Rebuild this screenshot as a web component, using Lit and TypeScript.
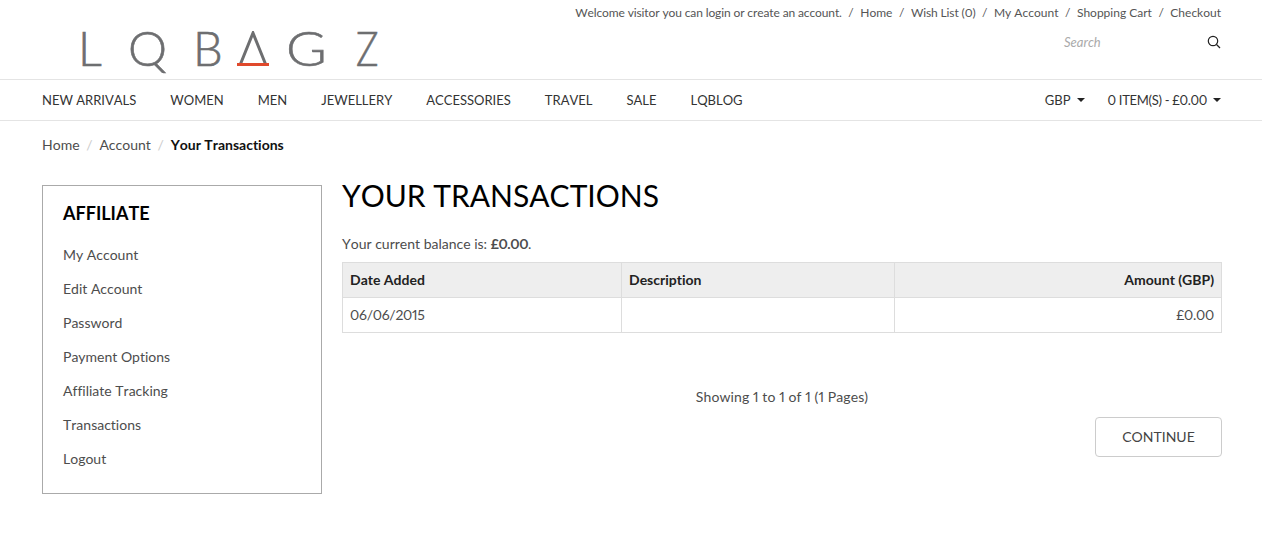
import { LitElement, html, css } from "lit";
import { customElement } from "lit/decorators.js";

const NAV = ["NEW ARRIVALS", "WOMEN", "MEN", "JEWELLERY", "ACCESSORIES", "TRAVEL", "SALE", "LQBLOG"];
const SIDE = ["My Account", "Edit Account", "Password", "Payment Options", "Affiliate Tracking", "Transactions", "Logout"];
const TOP = ["Home", "Wish List (0)", "My Account", "Shopping Cart", "Checkout"];

@customElement("app-root")
export class AppRoot extends LitElement {
  static styles = css`
    :host {
      display: block;
      font-family: Lato, "Liberation Sans", sans-serif;
      font-size: 14px;
      line-height: 20px;
      color: #4d4d4d;
      background: #fff;
      height: 560px;
      overflow: hidden;
      font-kerning: none;
      font-variant-ligatures: none;
      font-variant-numeric: proportional-nums;
    }
    .header {
      height: 79px;
      display: flex;
      justify-content: space-between;
      padding: 0 40px 0 78px;
    }
    .logo {
      display: flex;
      align-items: flex-start;
      padding-top: 24px;
      font-size: 47px;
      font-weight: 300;
      -webkit-text-stroke: 0.6px #6d6e70;
      line-height: 48px;
      color: #6d6e70;
      height: 48px;
    }
    .logo span {
      display: block;
      transform-origin: left center;
    }
    .logo .l { margin-right: 26px; }
    .logo .q { margin-right: 28px; transform: scaleX(1.05); }
    .logo .b { margin-right: 14px; }
    .logo .g { margin: 0 36px 0 17px; transform: scaleX(1.18); }
    .logo .z { transform: scaleX(0.8); }
    .logo svg {
      display: block;
      margin-top: 7px;
    }
    .header-right {
      display: flex;
      flex-direction: column;
      align-items: flex-end;
    }
    .top-links {
      display: flex;
      font-size: 12px;
      line-height: 16px;
      padding: 5px 1px 0 0;
      color: #555;
    }
    .top-links i {
      font-style: normal;
      padding: 0 6.5px;
    }
    .tight {
      letter-spacing: -0.12px;
    }
    .search {
      display: flex;
      align-items: center;
      justify-content: space-between;
      width: 158px;
      margin-top: 13px;
      font-size: 13px;
      font-style: italic;
      color: #aaa;
      line-height: 16px;
    }
    .search svg {
      display: block;
      margin-right: 1px;
    }
    .nav {
      height: 40px;
      border-top: 1px solid #e4e4e4;
      border-bottom: 1px solid #e4e4e4;
      display: flex;
      align-items: center;
      justify-content: space-between;
      padding: 0 41px 0 42px;
      font-size: 13px;
      color: #333;
    }
    .nav-left {
      display: flex;
      gap: 34px;
    }
    .nav-right {
      display: flex;
      gap: 23px;
    }
    .drop {
      display: flex;
      align-items: center;
      gap: 6px;
    }
    .count {
      letter-spacing: -0.3px;
    }
    .caret {
      width: 0;
      height: 0;
      border-left: 4px solid transparent;
      border-right: 4px solid transparent;
      border-top: 4px solid #222;
    }
    .crumbs {
      display: flex;
      padding: 14px 42px 0;
      height: 50px;
      box-sizing: border-box;
    }
    .crumbs i {
      font-style: normal;
      color: #ccc;
      padding: 0 6.75px;
    }
    .crumbs b {
      color: #111;
    }
    .main {
      display: flex;
      gap: 20px;
      padding: 14px 40px 0 42px;
    }
    .side {
      width: 280px;
      height: 309px;
      box-sizing: border-box;
      border: 1px solid #aaa;
      padding: 14px 20px;
      flex: none;
    }
    .side h3 {
      margin: 0 0 12px;
      font-size: 18px;
      line-height: 26px;
      font-weight: 700;
      color: #000;
    }
    .side div {
      height: 34px;
      line-height: 34px;
    }
    .content {
      flex: 1;
      min-width: 0;
    }
    h1 {
      margin: -1px 0 0;
      font-size: 30px;
      line-height: 22px;
      font-weight: 400;
      color: #000;
    }
    .balance {
      margin-top: 28px;
      height: 20px;
    }
    .balance b {
      letter-spacing: -0.4px;
    }
    table {
      width: 100%;
      margin-top: 8px;
      border-collapse: collapse;
      table-layout: fixed;
    }
    th, td {
      border: 1px solid #ddd;
      padding: 7px;
      height: 20px;
      text-align: left;
      font-weight: 400;
    }
    td {
      letter-spacing: -0.25px;
    }
    th {
      background: #eee;
      font-weight: 700;
      color: #222;
    }
    .r {
      text-align: right;
    }
    .pages {
      text-align: center;
      margin-top: 54px;
      letter-spacing: 0.1px;
    }
    .actions {
      display: flex;
      justify-content: flex-end;
      margin-top: 10px;
    }
    .btn {
      width: 127px;
      height: 40px;
      box-sizing: border-box;
      border: 1px solid #ccc;
      border-radius: 4px;
      text-align: center;
      line-height: 38px;
      color: #444;
    }
  `;

  render() {
    return html`
      <div class="header">
        <div class="logo">
          <span class="l">L</span>
          <span class="q">Q</span>
          <span class="b">B</span>
          <svg width="32" height="35" viewBox="0 0 32 35" aria-hidden="true">
            <path d="M3.5 33 L16 2 L28.5 33" fill="none" stroke="#6d6e70" stroke-width="3" />
            <path d="M0 33.5 H32" stroke="#e0492c" stroke-width="3" />
          </svg>
          <span class="g">G</span>
          <span class="z">Z</span>
        </div>
        <div class="header-right">
          <div class="top-links">
            <span class="tight">Welcome visitor you can login or create an account.</span>
            ${TOP.map((t) => html`<i>/</i><span class=${t.startsWith("Wish") ? "tight" : ""}>${t}</span>`)}
          </div>
          <div class="search">
            <span>Search</span>
            <svg width="14" height="14" viewBox="0 0 14 14" aria-hidden="true">
              <circle cx="6" cy="6" r="4.7" fill="none" stroke="#222" stroke-width="1.2" />
              <path d="M9.5 9.5 L13 13" stroke="#222" stroke-width="1.3" />
            </svg>
          </div>
        </div>
      </div>
      <div class="nav">
        <div class="nav-left">${NAV.map((n) => html`<span>${n}</span>`)}</div>
        <div class="nav-right">
          <span class="drop">GBP <span class="caret"></span></span>
          <span class="drop"><span class="count">0 ITEM(S) - £0.00</span> <span class="caret"></span></span>
        </div>
      </div>
      <div class="crumbs">
        <span>Home</span><i>/</i><span>Account</span><i>/</i><b>Your Transactions</b>
      </div>
      <div class="main">
        <div class="side">
          <h3>AFFILIATE</h3>
          ${SIDE.map((s) => html`<div>${s}</div>`)}
        </div>
        <div class="content">
          <h1>YOUR TRANSACTIONS</h1>
          <div class="balance">Your current balance is: <b>£0.00</b>.</div>
          <table>
            <colgroup>
              <col style="width:279px" />
              <col style="width:273px" />
              <col />
            </colgroup>
            <tr><th>Date Added</th><th>Description</th><th class="r">Amount (GBP)</th></tr>
            <tr><td>06/06/2015</td><td></td><td class="r">£0.00</td></tr>
          </table>
          <div class="pages">Showing 1 to 1 of 1 (1 Pages)</div>
          <div class="actions"><div class="btn">CONTINUE</div></div>
        </div>
      </div>
    `;
  }
}
